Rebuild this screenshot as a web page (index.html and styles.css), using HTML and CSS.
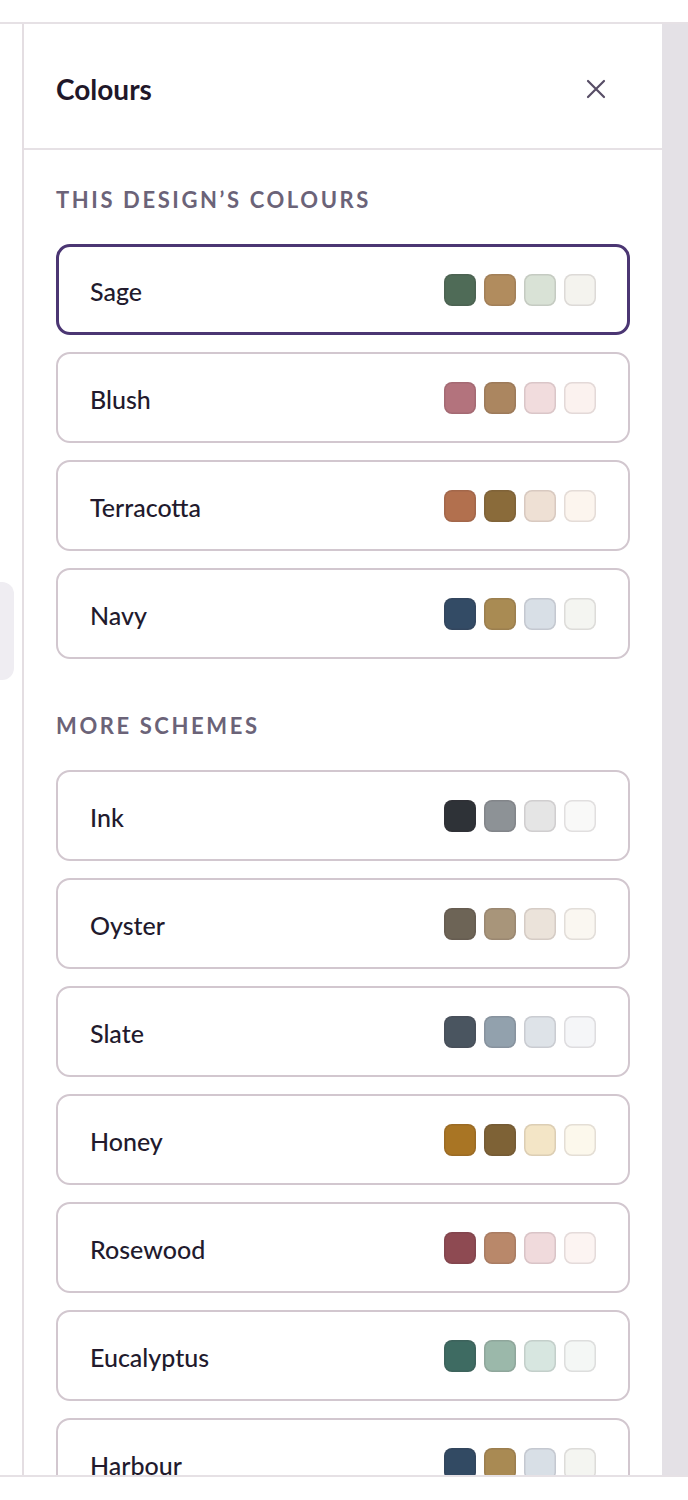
FILE: index.html
```html
<!DOCTYPE html>
<html lang="en">
<head>
<meta charset="utf-8">
<title>Colours</title>
<link rel="stylesheet" href="styles.css">
</head>
<body>
<div class="frame">
  <div class="rail">
    <div class="rail-pill"></div>
  </div>
  <aside class="panel">
    <header class="panel-head">
      <h1 class="panel-title">Colours</h1>
      <button class="close" aria-label="Close">
        <svg width="20" height="20" viewBox="0 0 20 20"><path d="M2 2 L18 18 M18 2 L2 18" stroke="#574d66" stroke-width="2.2" stroke-linecap="round" fill="none"/></svg>
      </button>
    </header>
    <div class="panel-body">
      <section class="group">
        <h2 class="group-label">This design’s colours</h2>
        <div class="list">
          <div class="scheme selected"><span class="name">Sage</span><span class="sw"><i class="c" style="background:#4f6b57"></i><i class="c" style="background:#b18c5e"></i><i class="c" style="background:#d9e2d6"></i><i class="c" style="background:#f4f3ee"></i></span></div>
          <div class="scheme"><span class="name">Blush</span><span class="sw"><i class="c" style="background:#b3737d"></i><i class="c" style="background:#ab8660"></i><i class="c" style="background:#f1dcdd"></i><i class="c" style="background:#fbf2ef"></i></span></div>
          <div class="scheme"><span class="name">Terracotta</span><span class="sw"><i class="c" style="background:#b2704e"></i><i class="c" style="background:#8a6b3a"></i><i class="c" style="background:#eee0d4"></i><i class="c" style="background:#fcf5ee"></i></span></div>
          <div class="scheme"><span class="name">Navy</span><span class="sw"><i class="c" style="background:#334b65"></i><i class="c" style="background:#a98b53"></i><i class="c" style="background:#d8dfe6"></i><i class="c" style="background:#f4f5f1"></i></span></div>
        </div>
      </section>
      <section class="group">
        <h2 class="group-label">More schemes</h2>
        <div class="list">
          <div class="scheme"><span class="name">Ink</span><span class="sw"><i class="c" style="background:#2e3237"></i><i class="c" style="background:#8d9296"></i><i class="c" style="background:#e5e5e5"></i><i class="c" style="background:#f9f9f8"></i></span></div>
          <div class="scheme"><span class="name">Oyster</span><span class="sw"><i class="c" style="background:#6d6456"></i><i class="c" style="background:#a8957a"></i><i class="c" style="background:#ebe3da"></i><i class="c" style="background:#faf7f1"></i></span></div>
          <div class="scheme"><span class="name">Slate</span><span class="sw"><i class="c" style="background:#4a5560"></i><i class="c" style="background:#92a1ad"></i><i class="c" style="background:#dee3e8"></i><i class="c" style="background:#f5f6f8"></i></span></div>
          <div class="scheme"><span class="name">Honey</span><span class="sw"><i class="c" style="background:#a97524"></i><i class="c" style="background:#7e6236"></i><i class="c" style="background:#f3e5c6"></i><i class="c" style="background:#fcf8ec"></i></span></div>
          <div class="scheme"><span class="name">Rosewood</span><span class="sw"><i class="c" style="background:#8e4a52"></i><i class="c" style="background:#b9886a"></i><i class="c" style="background:#f0dadc"></i><i class="c" style="background:#fcf4f2"></i></span></div>
          <div class="scheme"><span class="name">Eucalyptus</span><span class="sw"><i class="c" style="background:#3e6b62"></i><i class="c" style="background:#9bb8aa"></i><i class="c" style="background:#d7e6e0"></i><i class="c" style="background:#f4f7f5"></i></span></div>
          <div class="scheme"><span class="name">Harbour</span><span class="sw"><i class="c" style="background:#324a63"></i><i class="c" style="background:#a98a53"></i><i class="c" style="background:#d8dfe6"></i><i class="c" style="background:#f4f5f1"></i></span></div>
        </div>
      </section>
    </div>
  </aside>
  <div class="backdrop"></div>
</div>
</body>
</html>
```

FILE: styles.css
```css
* { box-sizing: border-box; }
html, body { margin: 0; padding: 0; background: #fff; }
body {
  font-family: Lato, "Noto Sans", "Liberation Sans", sans-serif;
  color: #231a2e;
}
.frame {
  margin-top: 22px;
  height: 1455px;
  border-top: 2px solid #e6e1e5;
  border-bottom: 2px solid #e6e1e5;
  display: grid;
  grid-template-columns: 24px 638px 26px;
  overflow: hidden;
}
.rail {
  border-right: 2px solid #e4dee2;
  background: #fff;
}
.rail-pill {
  margin-top: 558px;
  width: 14px;
  height: 98px;
  background: #efedf2;
  border-radius: 0 12px 12px 0;
}
.backdrop { background: #e4e1e6; }
.panel { background: #fff; min-height: 0; overflow: hidden; }
.panel-head {
  height: 126px;
  border-bottom: 2px solid #e6e1e5;
  display: flex;
  align-items: center;
  justify-content: space-between;
  padding: 0 46px 0 32px;
}
.panel-title {
  margin: 0;
  padding-top: 5px;
  font-size: 28px;
  font-weight: 700;
  color: #1f1729;
}
.close {
  width: 40px; height: 40px;
  border: 0; background: transparent; padding: 0;
  margin-top: 6px;
  display: flex; align-items: center; justify-content: center;
}
.panel-body { padding: 37px 32px 0; }
.group + .group { margin-top: 54px; }
.group-label {
  margin: 0 0 31px;
  font-size: 22px;
  line-height: 26px;
  font-weight: 700;
  letter-spacing: 2.6px;
  text-transform: uppercase;
  color: #6b6378;
}
.list { display: flex; flex-direction: column; gap: 17px; }
.scheme {
  height: 91px;
  border: 2px solid #d2c7cf;
  border-radius: 14px;
  display: flex;
  align-items: center;
  justify-content: space-between;
  padding: 0 32px;
}
.scheme.selected {
  border: 3px solid #4b3673;
  padding: 0 31px;
}
.name {
  font-size: 25px;
  font-weight: 500;
  color: #221a2d;
  padding-top: 2px;
}
.sw { display: flex; gap: 8px; }
.c {
  display: block;
  width: 32px; height: 32px;
  border-radius: 8px;
  box-shadow: inset 0 0 0 1.5px rgba(60, 40, 50, 0.12);
}
```
